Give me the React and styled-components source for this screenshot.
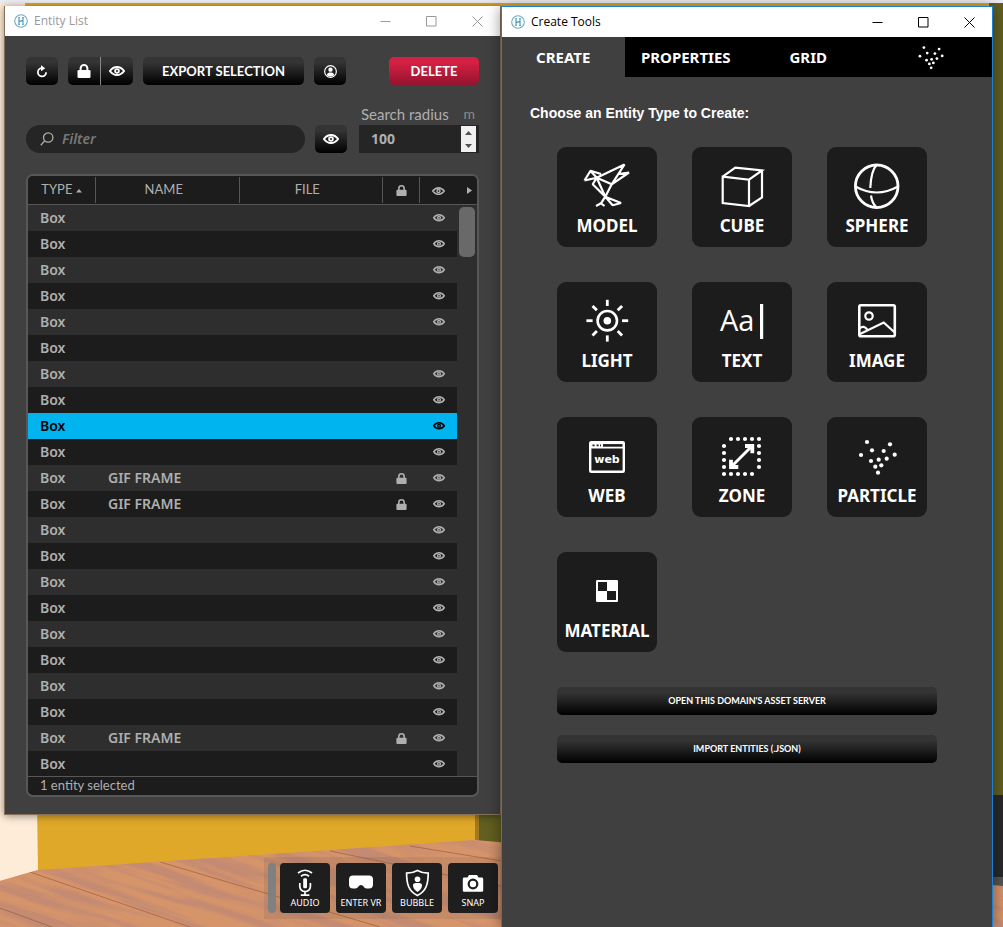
import React, { useState } from "react";
import styled, { createGlobalStyle, css } from "styled-components";

const uiFont = '"Open Sans", "Noto Sans", sans-serif';
const capsFont = 'Lato, "Open Sans", sans-serif';
const listFont = '"Noto Sans", "Open Sans", sans-serif';

const GlobalStyle = createGlobalStyle`
  *, *::before, *::after { box-sizing: border-box; }
  body { margin: 0; background: #e0a828; font-family: ${uiFont}; }
  button, input { font: inherit; margin: 0; padding: 0; border: 0; }
`;

/* ---------- desktop ---------- */

const Desktop = styled.main`
  position: relative;
  min-height: 100vh;
  overflow: hidden;
  padding: 6px 10px 0 4px;
  display: grid;
  grid-template-columns: minmax(0, 497fr) minmax(0, 492fr);
`;

const Backdrop = styled.svg`
  position: absolute;
  inset: 0;
  width: 100%;
  height: 100%;
  display: block;
`;

const Column = styled.div`
  position: relative;
  display: flex;
  flex-direction: column;
  justify-content: space-between;
  gap: 20px;
  padding-bottom: 8px;
`;

const WindowFrame = styled.section`
  position: relative;
  display: flex;
  flex-direction: column;
  background: #404040;
  border: 1px solid ${(p) => (p.$active ? "#1c80d4" : "#85715a")};
  border-top-width: ${(p) => (p.$active ? "1px" : "0")};
  border-bottom-width: ${(p) => (p.$active ? "0" : "1px")};
  box-shadow: 0 1px ${(p) => (p.$active ? "14px" : "8px")} rgba(0, 0, 0, 0.45);
`;

const TitleBar = styled.header`
  display: flex;
  align-items: center;
  height: 30px;
  padding-left: 9px;
  background: #fff;
  color: ${(p) => (p.$active ? "#000" : "#999")};
`;

const Title = styled.h1`
  flex: 1;
  margin: 0 0 0 6px;
  font: 400 12px/16px ${uiFont};
`;

const CaptionButton = styled.button`
  width: 46px;
  height: 30px;
  display: grid;
  place-items: center;
  background: transparent;
  color: inherit;
`;

/* ---------- shared controls ---------- */

const face = css`
  background: linear-gradient(#343434 20%, #000 100%);
  color: #fff;
`;

const PushButton = styled.button`
  ${face}
  height: 28px;
  width: ${(p) => p.$width || "auto"};
  display: flex;
  align-items: center;
  justify-content: center;
  border-radius: 5px;
  font: 700 ${(p) => (p.$small ? "9px" : "13px")} / 16px ${capsFont};
  ${(p) => p.$danger && css`background: linear-gradient(#d42043 20%, #94132e 100%);`}
`;

const ButtonPair = styled.div`
  display: flex;
  gap: 1px;
  background: linear-gradient(#888, #888) center / 1px 100% no-repeat;
  ${PushButton}:first-child { border-radius: 5px 0 0 5px; }
  ${PushButton}:last-child { border-radius: 0 5px 5px 0; }
`;

/* ---------- entity list ---------- */

const ListBody = styled.div`
  padding: 21px 21px 17px;
`;

const Toolbar = styled.div`
  display: flex;
  gap: 10px;
  margin-bottom: 20px;
`;

const Spacer = styled.span`
  flex: 1;
`;

const FilterRow = styled.div`
  display: flex;
  align-items: flex-end;
  margin-bottom: 21px;
`;

const FilterBox = styled.label`
  flex: 1;
  min-width: 0;
  height: 28px;
  margin-right: 10px;
  padding: 0 14px;
  display: flex;
  align-items: center;
  gap: 8px;
  border-radius: 14px;
  background: #252525;
  color: #afafaf;
`;

const FilterInput = styled.input`
  flex: 1;
  min-width: 0;
  background: transparent;
  color: #afafaf;
  font: italic 600 14px/20px ${listFont};
  outline: none;
  &::placeholder { color: #777; opacity: 1; }
`;

const RadiusField = styled.div`
  width: 120px;
  margin-left: 12px;
`;

const RadiusLabel = styled.label`
  display: flex;
  justify-content: space-between;
  height: 20px;
  padding: 0 4px 0 2px;
  color: #afafaf;
  font: 400 15px/18px ${capsFont};
`;

const Unit = styled.span`
  color: #8c8c8c;
  font-size: 14px;
`;

const RadiusBox = styled.div`
  display: flex;
  height: 28px;
  padding: 1px 3px 1px 12px;
  background: #252525;
`;

const RadiusInput = styled.input`
  flex: 1;
  min-width: 0;
  background: transparent;
  color: #afafaf;
  font: 700 14px/20px ${listFont};
  outline: none;
  appearance: textfield;
  &::-webkit-inner-spin-button { appearance: none; }
`;

const Spinner = styled.div`
  width: 15px;
  display: grid;
  grid-template-rows: 1fr 1fr;
`;

const SpinButton = styled.button`
  display: grid;
  place-items: center;
  background: #f0f0f0;
  color: #505050;
`;

const TablePanel = styled.div`
  border: 2px solid #575757;
  border-radius: 7px;
  background: #1c1c1c;
  overflow: hidden;
`;

const TableViewport = styled.div`
  position: relative;
  height: 600px;
  overflow: hidden;
`;

const EntityTable = styled.table`
  width: 100%;
  table-layout: fixed;
  border-collapse: separate;
  border-spacing: 0;
  color: #afafaf;
`;

const Col = styled.col`
  width: ${(p) => p.$width};
`;

const HeadCell = styled.th`
  height: 29px;
  padding: 0 ${(p) => (p.$wide ? "8px" : "1px")} 2px 0;
  border-bottom: 1px solid #575757;
  background: ${(p) =>
    p.$divided
      ? "linear-gradient(#575757, #575757) right center / 1px 26px no-repeat #1c1c1c"
      : "#1c1c1c"};
  font: 400 13px/16px ${capsFont};
  text-align: center;
  svg { vertical-align: middle; }
`;

const MoreCell = styled(HeadCell)`
  padding-right: 5px;
  text-align: right;
`;

const Row = styled.tr`
  background: ${(p) => (p.$selected ? "#00b4ef" : p.$odd ? "#2e2e2e" : "#1c1c1c")};
  color: ${(p) => (p.$selected ? "#000" : "#afafaf")};
`;

const Cell = styled.td`
  height: 26px;
  padding: ${(p) => (p.$icon ? "0" : "0 0 0 12px")};
  font: 600 14px/20px ${listFont};
  text-align: ${(p) => (p.$icon ? "center" : "left")};
  white-space: nowrap;
  svg { display: block; margin: 0 auto; }
`;

const TrackCell = styled.td`
  background: #2e2e2e;
`;

const ScrollThumb = styled.div`
  position: absolute;
  top: 31px;
  right: 2px;
  width: 16px;
  height: 50px;
  border-radius: 5px;
  background: #696969;
`;

const Status = styled.p`
  height: 19px;
  margin: 0;
  padding-left: 12px;
  border-top: 1px solid #575757;
  color: #afafaf;
  font: 400 13px/17px ${capsFont};
`;

/* ---------- dock ---------- */

const Dock = styled.nav`
  align-self: flex-end;
  display: flex;
  gap: 6px;
  padding: 6px 3px 6px 4px;
  background: rgba(110, 90, 80, 0.16);
`;

const DockHandle = styled.span`
  width: 8px;
  margin-right: -2px;
  border-radius: 4px;
  background: #808080;
`;

const DockButton = styled.button`
  width: 50px;
  height: 50px;
  display: flex;
  flex-direction: column;
  align-items: center;
  border-radius: 4px;
  background: #1e1e1e;
  color: #fff;
  font: 400 9px/10px ${listFont};
  white-space: nowrap;
`;

/* ---------- create tools ---------- */

const Tabs = styled.div`
  display: flex;
  height: 40px;
`;

const Tab = styled.button`
  flex: 1 1 0;
  min-width: 0;
  display: grid;
  place-items: center;
  background: ${(p) => (p.$active ? "#404040" : "#000")};
  color: #fff;
  font: 700 15px/20px ${listFont};
`;

const CreateBody = styled.div`
  padding: 27px 28px;
`;

const Prompt = styled.h2`
  margin: 0 0 24px;
  color: #fff;
  font: 700 14px/19px "Liberation Sans", Arial, sans-serif;
`;

const CreateContent = styled.div`
  padding: 0 27px;
`;

const TileGrid = styled.div`
  display: grid;
  grid-template-columns: repeat(auto-fill, 100px);
  gap: 35px;
  margin-bottom: 35px;
`;

const Tile = styled.button`
  height: 100px;
  padding-top: 15px;
  display: flex;
  flex-direction: column;
  align-items: center;
  gap: 4px;
  border-radius: 9px;
  background: #1c1c1c;
  color: #fff;
  font: 700 17px/20px ${listFont};
`;

const Actions = styled.div`
  display: grid;
  gap: 20px;
`;

/* ---------- drawings ---------- */

const Logo = () => (
  <svg width="14" height="14" viewBox="0 0 14 14" fill="none" stroke="#4796b4">
    <circle cx="7" cy="7" r="6.3" strokeWidth="1.1" opacity=".8" />
    <path d="M5 3.5v7M9 3.5v7M5 7.6l4-1.2" strokeWidth="1.1" />
    <path d="M4.2 3.6h1.6M8.2 3.6h1.6M4.2 10.4h1.6M8.2 10.4h1.6" strokeWidth=".9" />
  </svg>
);

const Caption = ({ d }) => (
  <svg width="11" height="11" viewBox="0 0 11 11" fill="none" stroke="currentColor">
    <path d={d} />
  </svg>
);

const Eye = ({ size = 16 }) => (
  <svg width={size} height={(size * 10) / 16} viewBox="0 0 16 10" fill="none">
    <path d="M.9 5C3 2.2 5.3 1 8 1s5 1.2 7.1 4C13 7.8 10.7 9 8 9S3 7.8.9 5z" stroke="currentColor" strokeWidth="2" />
    <path fillRule="evenodd" fill="currentColor" d="M8 2.2a2.8 2.8 0 1 0 0 5.600 2.800 2.800 0 0 0 0-5.600zm0 1.800a1 1 0 1 1 0 2 1 1 0 0 1 0-2z" />
  </svg>
);

const Lock = ({ size = 14 }) => (
  <svg width={size} height={size} viewBox="0 0 14 14">
    <path d="M3.6 7V4.4a3.4 3.4 0 0 1 6.8 0V7" fill="none" stroke="currentColor" strokeWidth="2" />
    <rect x="0.5" y="6" width="13" height="8" rx="1.3" fill="currentColor" />
  </svg>
);

const Reload = () => (
  <svg width="12" height="13" viewBox="0 0 12 13" fill="none" stroke="#fff" strokeWidth="1.8">
    <path d="M5.6 3.2a4.1 4.1 0 1 0 4.5 4" />
    <path d="M5 .2v6L9.2 3.2z" fill="#fff" stroke="none" />
  </svg>
);

const Person = () => (
  <svg width="13" height="13" viewBox="0 0 12 12">
    <circle cx="6" cy="6" r="5.4" fill="none" stroke="#fff" strokeWidth="1.1" />
    <circle cx="6" cy="4.3" r="2" fill="#fff" />
    <path d="M2.5 9.3C3 7.4 4.2 6.9 6 6.9s3 .5 3.5 2.4A5 5 0 0 1 6 10.7a5 5 0 0 1-3.5-1.4z" fill="#fff" />
  </svg>
);

const Search = () => (
  <svg width="14" height="14" viewBox="0 0 14 14" fill="none" stroke="currentColor" strokeWidth="1.3">
    <circle cx="8.2" cy="5.5" r="4.7" />
    <path d="M4.6 8.9L.8 13.2" />
  </svg>
);

const Triangle = ({ d, w, h }) => (
  <svg width={w} height={h} viewBox={`0 0 ${w} ${h}`} fill="currentColor">
    <path d={d} />
  </svg>
);

const particles = [
  [15, 10], [38, 12.3], [20, 18.3], [31.7, 19], [9, 23], [42.7, 22.7],
  [19, 29], [26.7, 27.7], [34.7, 26.7], [23.3, 34.7], [29.3, 33.3], [26, 40.7],
];

const zoneDots = [
  [14, 7], [21, 7], [28, 7], [35, 7], [42, 7], [42, 14], [42, 21], [42, 28], [42, 35],
  [7, 14], [7, 21], [7, 28], [7, 35], [7, 42], [14, 42], [21, 42], [28, 42], [35, 42],
];

const rays = [0, 45, 90, 135, 180, 225, 270, 315];

const glyphs = {
  MODEL: (
    <path strokeLinejoin="bevel" d="M2.5 18.5L8.5 8.7 19 12M2.5 18.5l12.2-2.8M8.5 8.7l6.2 7L42.5 2.5 29.7 22.3l-15-6.6M36.3 12L47 10.5 29.7 22.3l-6.4 12.4-8.6-19-4 6.6 12.6 12.4L39 41l-8.3 2.3-7.4-8.6-4.3 6.6-5 2.7M19 41.3l3.5 2.7" />
  ),
  CUBE: <path d="M5.7 14.7L32 17.7V44L5.7 41zM5.7 14.7l12.6-9L45 8.5 32 17.7M45 8.5v27L32 44" />,
  SPHERE: (
    <>
      <circle cx="24.7" cy="24.3" r="21.3" strokeWidth="2.8" />
      <path d="M3.5 24.5Q24.7 36.5 46 24.5M24.5 3Q19 9 18.3 26M19 33.5Q20 41 24.5 45.5" />
    </>
  ),
  LIGHT: (
    <>
      <circle cx="25.3" cy="23.7" r="9.7" strokeWidth="2.6" />
      <circle cx="25.3" cy="23.7" r="3.8" fill="#fff" stroke="none" />
      {rays.map((a) => (
        <path key={a} d="M25.3 2.8v6.2" strokeWidth="2.8" transform={`rotate(${a} 25.3 23.7)`} />
      ))}
    </>
  ),
  TEXT: (
    <>
      <text x="3" y="34" fill="#fff" stroke="none" fontFamily="Open Sans, Noto Sans, sans-serif" fontWeight="400" fontSize="29">
        Aa
      </text>
      <path d="M44.6 7v35" strokeWidth="3.2" />
    </>
  ),
  IMAGE: (
    <>
      <rect x="7.3" y="8.3" width="35.5" height="31" rx="1.5" strokeWidth="2.6" />
      <circle cx="17" cy="19" r="3.7" />
      <path d="M7.5 37.2l24.2-11.7L43 35.8M7.5 31.5q4.3-4 8.2 1.6" />
    </>
  ),
  WEB: (
    <>
      <rect x="8.2" y="10.2" width="33.6" height="29.6" rx="1" strokeWidth="2.4" />
      <path d="M9 13h32" strokeWidth="7" />
      <path d="M21 13.4h19.5" stroke="#1c1c1c" strokeWidth="2.6" />
      <path d="M10.5 13.4h2M14.6 13.4h2M18 13.4h1" stroke="#1c1c1c" strokeWidth="1.6" />
      <text x="25" y="31" fill="#fff" stroke="none" fontFamily="DejaVu Sans, sans-serif" fontWeight="700" fontSize="11" textAnchor="middle">
        web
      </text>
    </>
  ),
  ZONE: (
    <>
      {zoneDots.map(([x, y]) => (
        <circle key={`${x}-${y}`} cx={x} cy={y} r="2.1" fill="#fff" stroke="none" />
      ))}
      <path d="M14 35L35 14" strokeWidth="3" />
      <path d="M28 14h7.3v7.3M21.3 35H14v-7.3" strokeWidth="3.8" />
    </>
  ),
  PARTICLE: particles.map(([x, y]) => (
    <circle key={`${x}-${y}`} cx={x} cy={y} r="2.1" fill="#fff" stroke="none" />
  )),
  MATERIAL: (
    <>
      <rect x="14" y="13" width="22" height="22" rx="1.3" fill="#fff" stroke="none" />
      <path d="M16 15h9v9h-9zM25 24h9v9h-9z" fill="#1c1c1c" stroke="none" />
    </>
  ),
};

const TileGlyph = ({ name, size = 50 }) => (
  <svg width={size} height={size} viewBox="0 0 50 50" fill="none" stroke="#fff" strokeWidth="2.2">
    {glyphs[name]}
  </svg>
);

const dockGlyphs = {
  AUDIO: (
    <g fill="none" stroke="#fff" strokeWidth="1.7">
      <path d="M18 10q7-5.5 14 0M21 13.2q4-3 8 0" />
      <rect x="23.2" y="15.3" width="3.8" height="10" rx="1.4" fill="#fff" stroke="none" />
      <path d="M19.8 20v3.5a5.3 5 0 0 0 10.6 0V20M25 28.5V32M20.8 32.2h8.6" />
    </g>
  ),
  "ENTER VR": (
    <path fill="#fff" d="M17 12.5h16a4 4 0 0 1 4 4v5a4 4 0 0 1-4 4h-2.500c-2.300 0-3.200-3.500-5.500-3.500s-3.200 3.500-5.500 3.500H17a4 4 0 0 1-4-4v-5a4 4 0 0 1 4-4z" />
  ),
  BUBBLE: (
    <>
      <path fill="none" stroke="#fff" strokeWidth="1.7" d="M25.4 7.500c3.500 2 7 2.700 10.800 2.700 0 10.500-2 18.300-10.800 22.300-8.800-4-10.800-11.800-10.800-22.300 3.800 0 7.300-.7 10.800-2.700z" />
      <circle cx="25.5" cy="16.2" r="2.8" fill="#fff" />
      <path fill="#fff" d="M21 22.200c0-1.800 1.500-2.200 4.500-2.200s4.500.4 4.500 2.200c0 2.800-1.700 5-4.500 6.800-2.800-1.800-4.500-4-4.500-6.800z" />
    </>
  ),
  SNAP: (
    <>
      <path fill="#fff" d="M16.200 14.500h3.300l1.500-2.500h8l1.500 2.500h3.300a1.400 1.400 0 0 1 1.400 1.400v11.500a1.400 1.400 0 0 1-1.400 1.400H16.200a1.400 1.400 0 0 1-1.400-1.400v-11.500a1.400 1.400 0 0 1 1.400-1.400z" />
      <circle cx="25" cy="21" r="4.300" fill="#fff" stroke="#1e1e1e" strokeWidth="2.200" />
    </>
  ),
};

const Scene = () => (
  <Backdrop viewBox="0 0 1003 927" preserveAspectRatio="none" aria-hidden="true">
    <defs>
      <filter id="grain" x="0" y="0" width="100%" height="100%">
        <feTurbulence type="fractalNoise" baseFrequency="0.008 0.11" numOctaves="4" seed="8" />
        <feColorMatrix values="0 0 0 0 .52  0 0 0 0 .25  0 0 0 0 .18  4 0 0 0 -1.65" />
      </filter>
      <clipPath id="floor">
        <path d="M0 881L38 870 475 840 1003 886V927H0z" />
      </clipPath>
    </defs>
    <rect width="1003" height="927" fill="#e0a828" />
    <path d="M0 0H25L38 870 0 881z" fill="#ffecd8" />
    <path d="M477 800H505V845H477zM989 0h14v800h-14z" fill="#625f20" />
    <path d="M475 800h4v41h-4z" fill="#a07a24" />
    <path d="M989 795h14v83h-14z" fill="#28292b" />
    <path d="M989 877h14v12h-14z" fill="#55544e" />
    <g clipPath="url(#floor)">
      <rect y="830" width="1003" height="97" fill="#d6946a" />
      <g transform="rotate(18 0 880)">
        <rect x="-20" y="540" width="1100" height="430" filter="url(#grain)" opacity=".75" />
      </g>
      <path
        d="M0 908L60 930M30 872L210 934M160 862L380 927M330 851L520 890M410 846L520 864"
        stroke="#8a4a34"
        strokeOpacity=".5"
        fill="none"
      />
    </g>
    <rect width="1003" height="3" fill="#ededf1" />
  </Backdrop>
);

/* ---------- windows ---------- */

const AppWindow = ({ title, active, children }) => (
  <WindowFrame $active={active} aria-label={title}>
    <TitleBar $active={active}>
      <Logo />
      <Title>{title}</Title>
      <CaptionButton aria-label={`Minimize ${title}`}><Caption d="M.5 5.500h10" /></CaptionButton>
      <CaptionButton aria-label={`Maximize ${title}`}><Caption d="M.5 .5h9.500v9.500H.5z" /></CaptionButton>
      <CaptionButton aria-label={`Close ${title}`}><Caption d="M.5 .5l10 10M10.500 .5l-10 10" /></CaptionButton>
    </TitleBar>
    {children}
  </WindowFrame>
);

const frames = new Set([10, 11, 20]);
const entities = Array.from({ length: 22 }, (_, i) => ({
  type: "Box",
  name: frames.has(i) ? "GIF FRAME" : "",
  locked: frames.has(i),
  visible: i !== 5,
}));

const EntityList = () => {
  const [selected, setSelected] = useState(8);
  const [radius, setRadius] = useState(100);
  return (
    <AppWindow title="Entity List">
      <ListBody>
        <Toolbar>
          <PushButton $width="32px" aria-label="Refresh"><Reload /></PushButton>
          <ButtonPair>
            <PushButton $width="32px" aria-label="Toggle lock"><Lock /></PushButton>
            <PushButton $width="32px" aria-label="Toggle visibility"><Eye /></PushButton>
          </ButtonPair>
          <PushButton $width="161px">EXPORT SELECTION</PushButton>
          <PushButton $width="32px" aria-label="Pal"><Person /></PushButton>
          <Spacer />
          <PushButton $width="90px" $danger>DELETE</PushButton>
        </Toolbar>
        <FilterRow>
          <FilterBox>
            <Search />
            <FilterInput type="text" placeholder="Filter" aria-label="Filter" />
          </FilterBox>
          <PushButton $width="32px" aria-label="In view only"><Eye /></PushButton>
          <RadiusField>
            <RadiusLabel htmlFor="radius">Search radius <Unit>m</Unit></RadiusLabel>
            <RadiusBox>
              <RadiusInput id="radius" type="number" value={radius} onChange={(e) => setRadius(Number(e.target.value))} />
              <Spinner>
                <SpinButton aria-label="Increase" onClick={() => setRadius(radius + 1)}><Triangle w={7} h={4} d="M0 4L3.500 0 7 4z" /></SpinButton>
                <SpinButton aria-label="Decrease" onClick={() => setRadius(radius - 1)}><Triangle w={7} h={4} d="M0 0L3.500 4 7 0z" /></SpinButton>
              </Spinner>
            </RadiusBox>
          </RadiusField>
        </FilterRow>
        <TablePanel>
          <TableViewport>
            <EntityTable>
              <colgroup>
                <Col $width="68px" />
                <Col $width="auto" />
                <Col $width="auto" />
                <Col $width="37px" />
                <Col $width="37px" />
                <Col $width="20px" />
              </colgroup>
              <thead>
                <tr>
                  <HeadCell $divided>TYPE <Triangle w={6} h={4} d="M0 3.500L3 0l3 3.500z" /></HeadCell>
                  <HeadCell $divided $wide>NAME</HeadCell>
                  <HeadCell $divided $wide>FILE</HeadCell>
                  <HeadCell $divided aria-label="Locked"><Lock size={11} /></HeadCell>
                  <HeadCell aria-label="Visible"><Eye size={13} /></HeadCell>
                  <MoreCell aria-label="More columns"><Triangle w={5} h={7} d="M0 0L5 3.500 0 7z" /></MoreCell>
                </tr>
              </thead>
              <tbody>
                {entities.map((e, i) => (
                  <Row key={i} $odd={i % 2 === 0} $selected={i === selected} onClick={() => setSelected(i)}>
                    <Cell>{e.type}</Cell>
                    <Cell>{e.name}</Cell>
                    <Cell />
                    <Cell $icon>{e.locked && <Lock size={11} />}</Cell>
                    <Cell $icon>{e.visible && <Eye size={12} />}</Cell>
                    <TrackCell />
                  </Row>
                ))}
              </tbody>
            </EntityTable>
            <ScrollThumb />
          </TableViewport>
          <Status>1 entity selected</Status>
        </TablePanel>
      </ListBody>
    </AppWindow>
  );
};

const CreateTools = () => (
  <AppWindow title="Create Tools" active>
    <Tabs>
      <Tab $active>CREATE</Tab>
      <Tab>PROPERTIES</Tab>
      <Tab>GRID</Tab>
      <Tab aria-label="Particles"><TileGlyph name="PARTICLE" size={33} /></Tab>
    </Tabs>
    <CreateBody>
      <Prompt>Choose an Entity Type to Create:</Prompt>
      <CreateContent>
        <TileGrid>
          {Object.keys(glyphs).map((name) => (
            <Tile key={name}>
              <TileGlyph name={name} />
              {name}
            </Tile>
          ))}
        </TileGrid>
        <Actions>
          <PushButton $small>OPEN THIS DOMAIN'S ASSET SERVER</PushButton>
          <PushButton $small>IMPORT ENTITIES (.JSON)</PushButton>
        </Actions>
      </CreateContent>
    </CreateBody>
  </AppWindow>
);

export default function App() {
  return (
    <>
      <GlobalStyle />
      <Desktop>
        <Scene />
        <Column>
          <EntityList />
          <Dock>
            <DockHandle />
            {Object.entries(dockGlyphs).map(([name, glyph]) => (
              <DockButton key={name}>
                <svg width="50" height="35" viewBox="0 0 50 35">{glyph}</svg>
                {name}
              </DockButton>
            ))}
          </Dock>
        </Column>
        <CreateTools />
      </Desktop>
    </>
  );
}
